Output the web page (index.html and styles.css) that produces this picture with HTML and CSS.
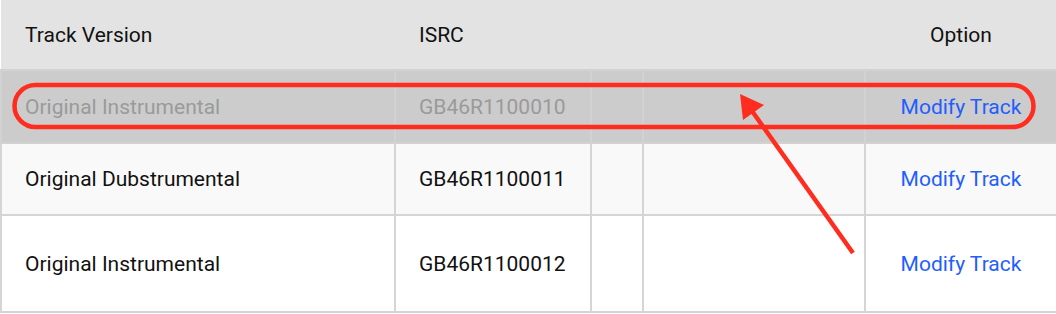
FILE: index.html
```html
<!DOCTYPE html>
<html lang="en">
<head>
  <meta charset="UTF-8" />
  <meta name="viewport" content="width=device-width, initial-scale=1.0"/>
  <title>Track Versions</title>
  <link rel="stylesheet" href="styles.css">
</head>
<body>

  <div class="track-table-wrap">
    <table class="track-table">
      <colgroup>
        <col class="col-version">
        <col class="col-isrc">
        <col class="col-small">
        <col class="col-blank">
        <col class="col-option">
      </colgroup>
      <thead>
        <tr>
          <th>Track Version</th>
          <th>ISRC</th>
          <th></th>
          <th></th>
          <th class="center">Option</th>
        </tr>
      </thead>
      <tbody>
        <tr class="row-selected">
          <td>Original Instrumental</td>
          <td>GB46R1100010</td>
          <td></td>
          <td></td>
          <td class="center"><a href="#" class="modify-link">Modify Track</a></td>
        </tr>
        <tr class="row-odd">
          <td>Original Dubstrumental</td>
          <td>GB46R1100011</td>
          <td></td>
          <td></td>
          <td class="center"><a href="#" class="modify-link">Modify Track</a></td>
        </tr>
        <tr class="row-even">
          <td>Original Instrumental</td>
          <td>GB46R1100012</td>
          <td></td>
          <td></td>
          <td class="center"><a href="#" class="modify-link">Modify Track</a></td>
        </tr>
      </tbody>
    </table>

    <!-- callout drawn over the selected row -->
    <svg class="callout" width="1056" height="314" viewBox="0 0 1056 314">
      <rect x="14.5" y="85" width="1019" height="42" rx="21" ry="21"
            fill="none" stroke="#ff2d1f" stroke-width="4.5"/>
      <line x1="853" y1="253" x2="752" y2="111"
            stroke="#ff2d1f" stroke-width="4.5"/>
      <polygon points="740,94 743,120 764,105" fill="#ff2d1f"/>
    </svg>
  </div>

</body>
</html>
```

FILE: styles.css
```css
body {
  font-family: Roboto, "Liberation Sans", Arial, sans-serif;
  background-color: #ffffff;
  margin: 0;
  padding: 0;
}

.track-table-wrap {
  position: relative;
  width: 1056px;
  height: 314px;
  overflow: hidden;
}

.track-table {
  width: 1056px;
  border-collapse: collapse;
  table-layout: fixed;
  font-size: 21px;
  color: #111;
}

.col-version { width: 394px; }
.col-isrc { width: 196px; }
.col-small { width: 52px; }
.col-blank { width: 222px; }
.col-option { width: 192px; }

th {
  background-color: #e3e3e3;
  font-weight: normal;
  text-align: left;
  height: 70px;
  padding: 0 0 0 24px;
  box-sizing: border-box;
}

td {
  border: 2px solid #d5d5d5;
  padding: 0 0 0 23px;
  text-align: left;
}

th.center,
td.center {
  text-align: center;
  padding: 0;
}

.row-selected td {
  background-color: #cccccc;
  color: #9a9a9a;
  height: 71px;
  border-color: #d2d2d2;
}

.row-odd td {
  background-color: #f9f9f9;
  height: 70px;
}

.row-even td {
  background-color: #ffffff;
  height: 95px;
}

.modify-link {
  color: #1f5eff;
  text-decoration: none;
}

.callout {
  position: absolute;
  top: 0;
  left: 0;
  pointer-events: none;
}
```
